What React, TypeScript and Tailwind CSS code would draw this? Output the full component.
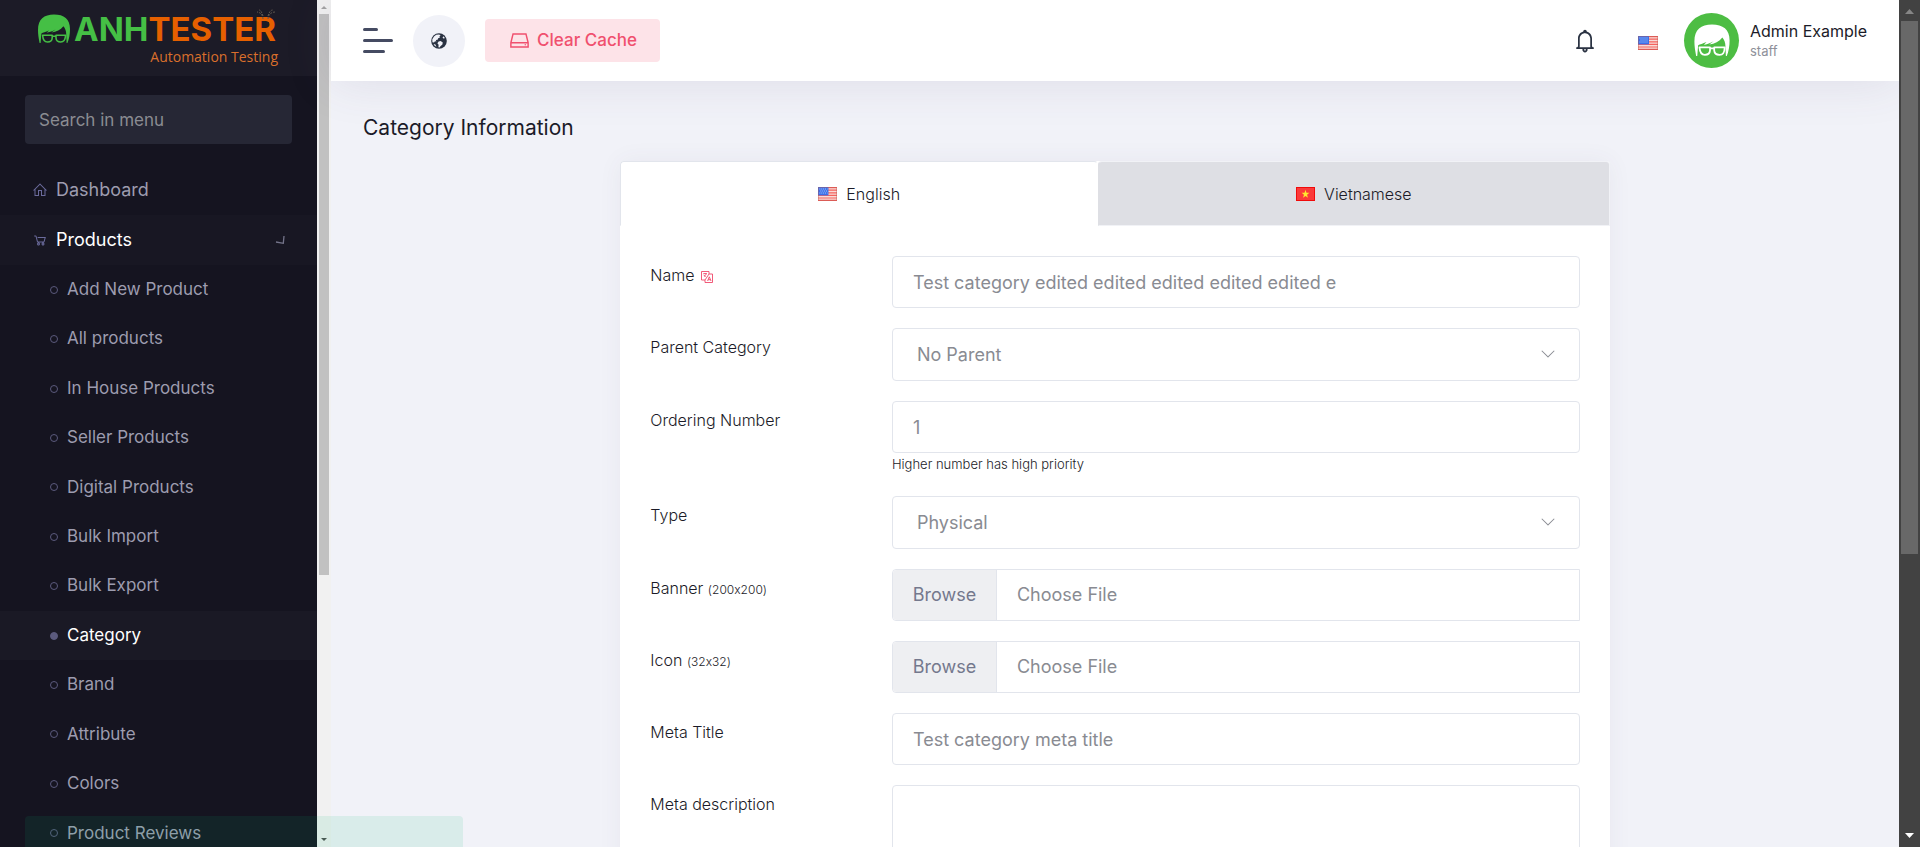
import React, { useState } from "react";
import type { ReactNode } from "react";
import {
  LiaHomeSolid,
  LiaShoppingCartSolid,
  LiaHddSolid,
  LiaBell,
  LiaAngleDownSolid,
} from "react-icons/lia";

const productLinks = [
  "Add New Product",
  "All products",
  "In House Products",
  "Seller Products",
  "Digital Products",
  "Bulk Import",
  "Bulk Export",
  "Category",
  "Brand",
  "Attribute",
  "Colors",
  "Product Reviews",
];

function Face({ className }: { className?: string }) {
  return (
    <svg viewBox="0 0 32 30" className={className} aria-hidden="true">
      <path
        fill="currentColor"
        d="M1.6 29 C0.6 24 0 20 0 16 C0 5 6 0.5 16 0.5 C26 0.5 32 5 32 15 C32 20 31.2 25 29.4 29 L28.6 29 L28.2 20 C28.3 17 27 14 25.4 12.2 C22.5 15.8 18.5 17.8 13.5 18.6 L17.5 15.6 C13.5 18 11 18.4 8.6 18.8 L11 16.4 C7.5 18 5 18.4 3.4 19.4 L2.6 29 Z"
      />
      <path
        fill="none"
        stroke="currentColor"
        strokeWidth="1.6"
        strokeLinejoin="round"
        d="M4.6 21.2 H14.2 V24 C14 27 12.5 28 9.5 28 C6.5 28 5 26.5 4.6 21.2 Z M18 21.2 H27.6 C27.2 26.5 26 28 22.8 28 C19.8 28 18.2 27 18 24 Z M14.2 22.2 H18"
      />
    </svg>
  );
}

function FlagUS({ className }: { className?: string }) {
  return (
    <svg viewBox="0 0 20 14" preserveAspectRatio="none" className={className} aria-hidden="true">
      <rect width="20" height="14" fill="#f7dcd8" />
      <path stroke="#f5625c" strokeWidth="1.2" d="M0 .6H20M0 3.2H20M0 5.8H20M0 8.4H20M0 11H20M0 13.4H20" />
      <rect width="11" height="8.4" fill="#3a70ea" />
      <path stroke="#b9cdf8" strokeWidth="1" strokeDasharray="1 1" d="M1.5 2H10M2.5 4H10M1.5 6H10" />
      <rect x=".5" y=".5" width="19" height="13" fill="none" stroke="#b5544e" strokeOpacity=".4" />
    </svg>
  );
}

function FlagVN({ className }: { className?: string }) {
  return (
    <svg viewBox="0 0 20 14" preserveAspectRatio="none" className={className} aria-hidden="true">
      <rect width="20" height="14" fill="#f00a0a" />
      <rect x="1" y="1" width="18" height="12" fill="#fb3a3a" />
      <path fill="#ffe82e" d="M10 2.8l1 3h3.1l-2.5 1.9 1 3L10 8.9l-2.6 1.8 1-3L5.900 5.800H9z" />
    </svg>
  );
}

function Globe() {
  return (
    <svg viewBox="0 0 16 16" className="size-4" aria-hidden="true">
      <circle cx="8" cy="8" r="7.800" fill="#2a3242" />
      <path
        fill="#f1f2f8"
        d="M5.200 1.800L8.200 1.400L9.600 2.600L8.400 3.400L9 4.600L7.200 5.200L6.600 6.800L4.800 7L5.400 8.400L4 8.200L3 9.600L1.400 9.200L1.300 6.200L3 3.400Z M7.600 8.400L9.600 8L11.800 9.400L11.400 11.400L9.400 13.200L8.600 14.600L7.400 14.200L7.600 11.800L6.400 10.200Z M12.200 3.200L13.800 4.800L13 5.800L11.600 4.800Z M2.600 11L4.400 11.600L5.400 13.800L3.600 12.800Z"
      />
    </svg>
  );
}

function TranslateIcon() {
  return (
    <svg viewBox="0 0 12 12" className="ml-[2px] inline-block size-3 text-[#ef486a]" fill="none" stroke="currentColor" strokeWidth=".9" role="img" aria-label="Translatable">
      <path d="M8 3V.5H.5V9H4M8 3h3.5v8.5H4V9M8 3L4 9" />
      <path d="M2.3 2.6h3.6M4.1 2v.6M3 5.4c1.2-.6 2-1.5 2.2-2.8M2.6 3.8l2 2M6.6 10l1.7-4.200L10 10M7.200 8.700h2.200" />
    </svg>
  );
}

function Row({ id, label, children }: { id: string; label: ReactNode; children: ReactNode }) {
  return (
    <div className="grid grid-cols-[26%_1fr] items-start">
      <label htmlFor={id} className="pt-[7px] text-base font-light text-[#1b1b28]">
        {label}
      </label>
      <div className="min-w-0">{children}</div>
    </div>
  );
}

function SizeNote({ children }: { children: ReactNode }) {
  return <small className="text-xs font-light [font-feature-settings:'calt'_0]">({children})</small>;
}

const fieldClass =
  "block w-full rounded border border-[#e2e5ec] bg-white text-lg text-[#898b92] outline-none focus:border-[#a0a5c0]";

function TextField({ id, value }: { id: string; value: string }) {
  return <input id={id} type="text" defaultValue={value} className={`${fieldClass} h-[52px] px-5`} />;
}

function SelectField({ id, options }: { id: string; options: string[] }) {
  return (
    <div className="relative">
      <select id={id} className={`${fieldClass} h-[53px] appearance-none px-6`}>
        {options.map((o) => (
          <option key={o}>{o}</option>
        ))}
      </select>
      <LiaAngleDownSolid className="pointer-events-none absolute right-6 top-[17px] size-4 text-[#898b92]" />
    </div>
  );
}

function FileField({ id }: { id: string }) {
  return (
    <button
      id={id}
      type="button"
      className="flex h-[52px] w-full items-stretch rounded-l border border-[#e2e5ec] bg-white text-left text-lg text-[#898b92]"
    >
      <span className="flex w-[104px] items-center justify-center rounded-l border-r border-[#e2e5ec] bg-[#eeeff2] text-[#74788d]">
        Browse
      </span>
      <span className="flex items-center px-5">Choose File</span>
    </button>
  );
}

function Sidebar() {
  return (
    <aside className="flex w-[317px] shrink-0 flex-col overflow-hidden bg-[#151420] text-[#9d9caf]">
      <a href="#" aria-label="Anh Tester Automation Testing" className="block h-[76px] shrink-0 bg-[#1c1b27] pt-[13px] pl-[38px]">
        <span className="flex items-center">
          <Face className="h-[30px] w-8 text-[#45bf45]" />
          <span className="relative pl-1 text-[33px] leading-8 font-bold">
            <span className="text-[#45bf45]">ANH</span>
            <span className="text-[#e66000]">TESTER</span>
            <svg viewBox="0 0 20 20" className="absolute -top-1 right-0 size-5" fill="none" stroke="#5f584f" aria-hidden="true">
              <path d="M7 10C7 6 4 3 1 3M7 7C6 4 5 1 3 1M12 10C12 6 15 3 19 3M12 7C13 4 14 1 17 1" strokeDasharray="2 1" />
              <path d="M7 13v3M12 13v3" stroke="#1c1b27" strokeWidth="2" />
            </svg>
          </span>
        </span>
        <span className="block w-[240px] text-right font-['Open_Sans'] text-sm leading-6 text-[#d96f2c]">Automation Testing</span>
      </a>
      <div className="px-[25px] pt-[19px]">
        <input
          type="text"
          aria-label="Search in menu"
          placeholder="Search in menu"
          className="h-[49px] w-full rounded bg-[#262735] px-[14px] text-[17px] text-white outline-none placeholder:text-[#8b8c92]"
        />
      </div>
      <nav className="mt-[21px]">
        <a href="#" className="flex h-[50px] items-center gap-2 px-8 text-lg">
          <LiaHomeSolid className="size-4 text-[#6b6b9c]" />
          Dashboard
        </a>
        <a href="#" className="flex h-[50px] items-center gap-2 bg-[#181723] px-8 text-lg text-white">
          <LiaShoppingCartSolid className="size-4 text-[#6b6b9c]" />
          <span className="flex-1">Products</span>
          <svg viewBox="0 0 10 10" className="size-[10px]" fill="none" stroke="#74748a" strokeWidth="1.3" aria-hidden="true">
            <path d="M1 7L8.300 8.300L9 1" />
          </svg>
        </a>
        <ul className="grid h-[593px] auto-rows-fr">
          {productLinks.map((name) => {
            const active = name === "Category";
            return (
              <li key={name} className={active ? "bg-[#1a1925]" : ""}>
                <a
                  href="#"
                  aria-current={active ? "page" : undefined}
                  className={`flex h-full items-center gap-[9px] pl-[50px] text-[17px] ${active ? "text-white" : ""}`}
                >
                  <span className={`size-2 rounded-full border border-[#5b5a7d] ${active ? "bg-[#5b5a7d]" : ""}`} />
                  {name}
                </a>
              </li>
            );
          })}
        </ul>
      </nav>
    </aside>
  );
}

function TopBar() {
  return (
    <header className="flex h-[81px] shrink-0 items-center bg-white px-8 shadow-[0_0_50px_rgba(82,63,105,0.12)]">
      <button type="button" aria-label="Toggle menu" className="flex w-[30px] flex-col gap-2">
        <span className="h-[3px] w-[15px] rounded bg-[#454b62]" />
        <span className="h-[3px] w-[30px] rounded bg-[#454b62]" />
        <span className="h-[3px] w-[22px] rounded bg-[#454b62]" />
      </button>
      <a href="#" aria-label="Browse website" className="ml-5 flex size-[52px] items-center justify-center rounded-full bg-[#f1f2f8]">
        <Globe />
      </a>
      <button type="button" className="ml-5 flex h-[43px] w-[175px] items-center justify-center gap-[6px] rounded bg-[#fde3e8] text-[17px] font-medium text-[#f0506e]">
        <LiaHddSolid className="size-[23px]" />
        Clear Cache
      </button>
      <div className="ml-auto flex items-center">
        <button type="button" aria-label="Notifications" className="text-[#2a3242]">
          <LiaBell className="size-7" />
        </button>
        <button type="button" aria-label="Language" className="ml-[39px]">
          <FlagUS className="mt-1 h-[14px] w-5" />
        </button>
        <a href="#" className="ml-[26px] flex items-center">
          <span className="flex size-[55px] items-center justify-center rounded-full bg-[#4dbd43]">
            <Face className="h-[33px] w-9 text-white" />
          </span>
          <span className="ml-[11px] w-[117px] whitespace-nowrap">
            <span className="block text-base leading-5 text-[#1b1b28]">Admin Example</span>
            <span className="block text-[13px] leading-5 text-[#8e9099]">staff</span>
          </span>
        </a>
      </div>
    </header>
  );
}

export default function App() {
  const [lang, setLang] = useState("en");
  const tab = (code: string) =>
    `flex h-[65px] flex-auto items-center justify-center gap-[9px] rounded-t border px-3 text-base font-light text-[#1b1b28] ${
      lang === code ? "border-[#e2e5ec] border-b-white bg-white border-r-white" : "border-[#f1f2f6] bg-[#dedfe4] border-l-[#dedfe4]"
    }`;
  return (
    <div className="relative flex h-screen overflow-hidden bg-[#f1f2f8] font-['Inter',sans-serif]">
      <Sidebar />
      <div aria-hidden="true" className="flex w-[14px] shrink-0 flex-col items-center bg-[#f1f1f1]">
        <svg viewBox="0 0 14 14" className="h-[14px] w-[14px] shrink-0">
          <path d="M4 9h6L7 6z" fill="#a3a3a3" />
        </svg>
        <div className="h-[561px] w-[10px] bg-[#c1c1c1]" />
        <svg viewBox="0 0 14 14" className="mt-auto h-[14px] w-[14px] shrink-0">
          <path d="M4 5h6L7 8z" fill="#505050" />
        </svg>
      </div>

      <div className="flex min-w-0 flex-1 flex-col">
        <TopBar />
        <main className="flex-1 overflow-hidden px-8 pt-8">
          <h1 className="text-[21px] leading-[30px] text-[#1b1b28]">Category Information</h1>
          <div className="mt-[18px] px-[10px]">
            <section className="mx-auto w-2/3 rounded bg-white shadow-[0_0_24px_rgba(82,63,105,0.06)]">
              <div className="flex" role="tablist">
                <button type="button" role="tab" aria-selected={lang === "en"} onClick={() => setLang("en")} className={tab("en")}>
                  <FlagUS className="h-[14px] w-[19px]" />
                  English
                </button>
                <button type="button" role="tab" aria-selected={lang === "vn"} onClick={() => setLang("vn")} className={tab("vn")}>
                  <FlagVN className="h-[14px] w-[19px]" />
                  Vietnamese
                </button>
              </div>
              <form className="flex flex-col gap-5 px-[30px] py-[30px]">
                <Row id="name" label={<>Name <TranslateIcon /></>}>
                  <TextField id="name" value="Test category edited edited edited edited edited e" />
                </Row>
                <Row id="parent" label="Parent Category">
                  <SelectField id="parent" options={["No Parent"]} />
                </Row>
                <Row id="order" label="Ordering Number">
                  <TextField id="order" value="1" />
                  <p className="text-[13px] leading-[23px] font-light text-[#1b1b28]">Higher number has high priority</p>
                </Row>
                <Row id="type" label="Type">
                  <SelectField id="type" options={["Physical", "Digital"]} />
                </Row>
                <Row id="banner" label={<>Banner <SizeNote>200x200</SizeNote></>}>
                  <FileField id="banner" />
                </Row>
                <Row id="icon" label={<>Icon <SizeNote>32x32</SizeNote></>}>
                  <FileField id="icon" />
                </Row>
                <Row id="meta-title" label="Meta Title">
                  <TextField id="meta-title" value="Test category meta title" />
                </Row>
                <Row id="meta-description" label="Meta description">
                  <textarea id="meta-description" rows={5} className={`${fieldClass} resize-none px-5 py-3`} />
                </Row>
              </form>
            </section>
          </div>
        </main>
      </div>

      <div aria-hidden="true" className="flex w-[21px] shrink-0 flex-col items-center bg-[#424242]">
        <svg viewBox="0 0 21 21" className="size-[21px] shrink-0">
          <path d="M6 14h9L10.5 9z" fill="#868686" />
        </svg>
        <div className="h-[533px] w-[17px] bg-[#686868]" />
        <svg viewBox="0 0 21 21" className="mt-auto size-[21px] shrink-0">
          <path d="M6 7h9l-4.5 5z" fill="#fff" />
        </svg>
      </div>

      <div role="status" className="pointer-events-none absolute bottom-0 left-[25px] h-[31px] w-[438px] rounded-t bg-[#0abb75]/10" />
    </div>
  );
}
